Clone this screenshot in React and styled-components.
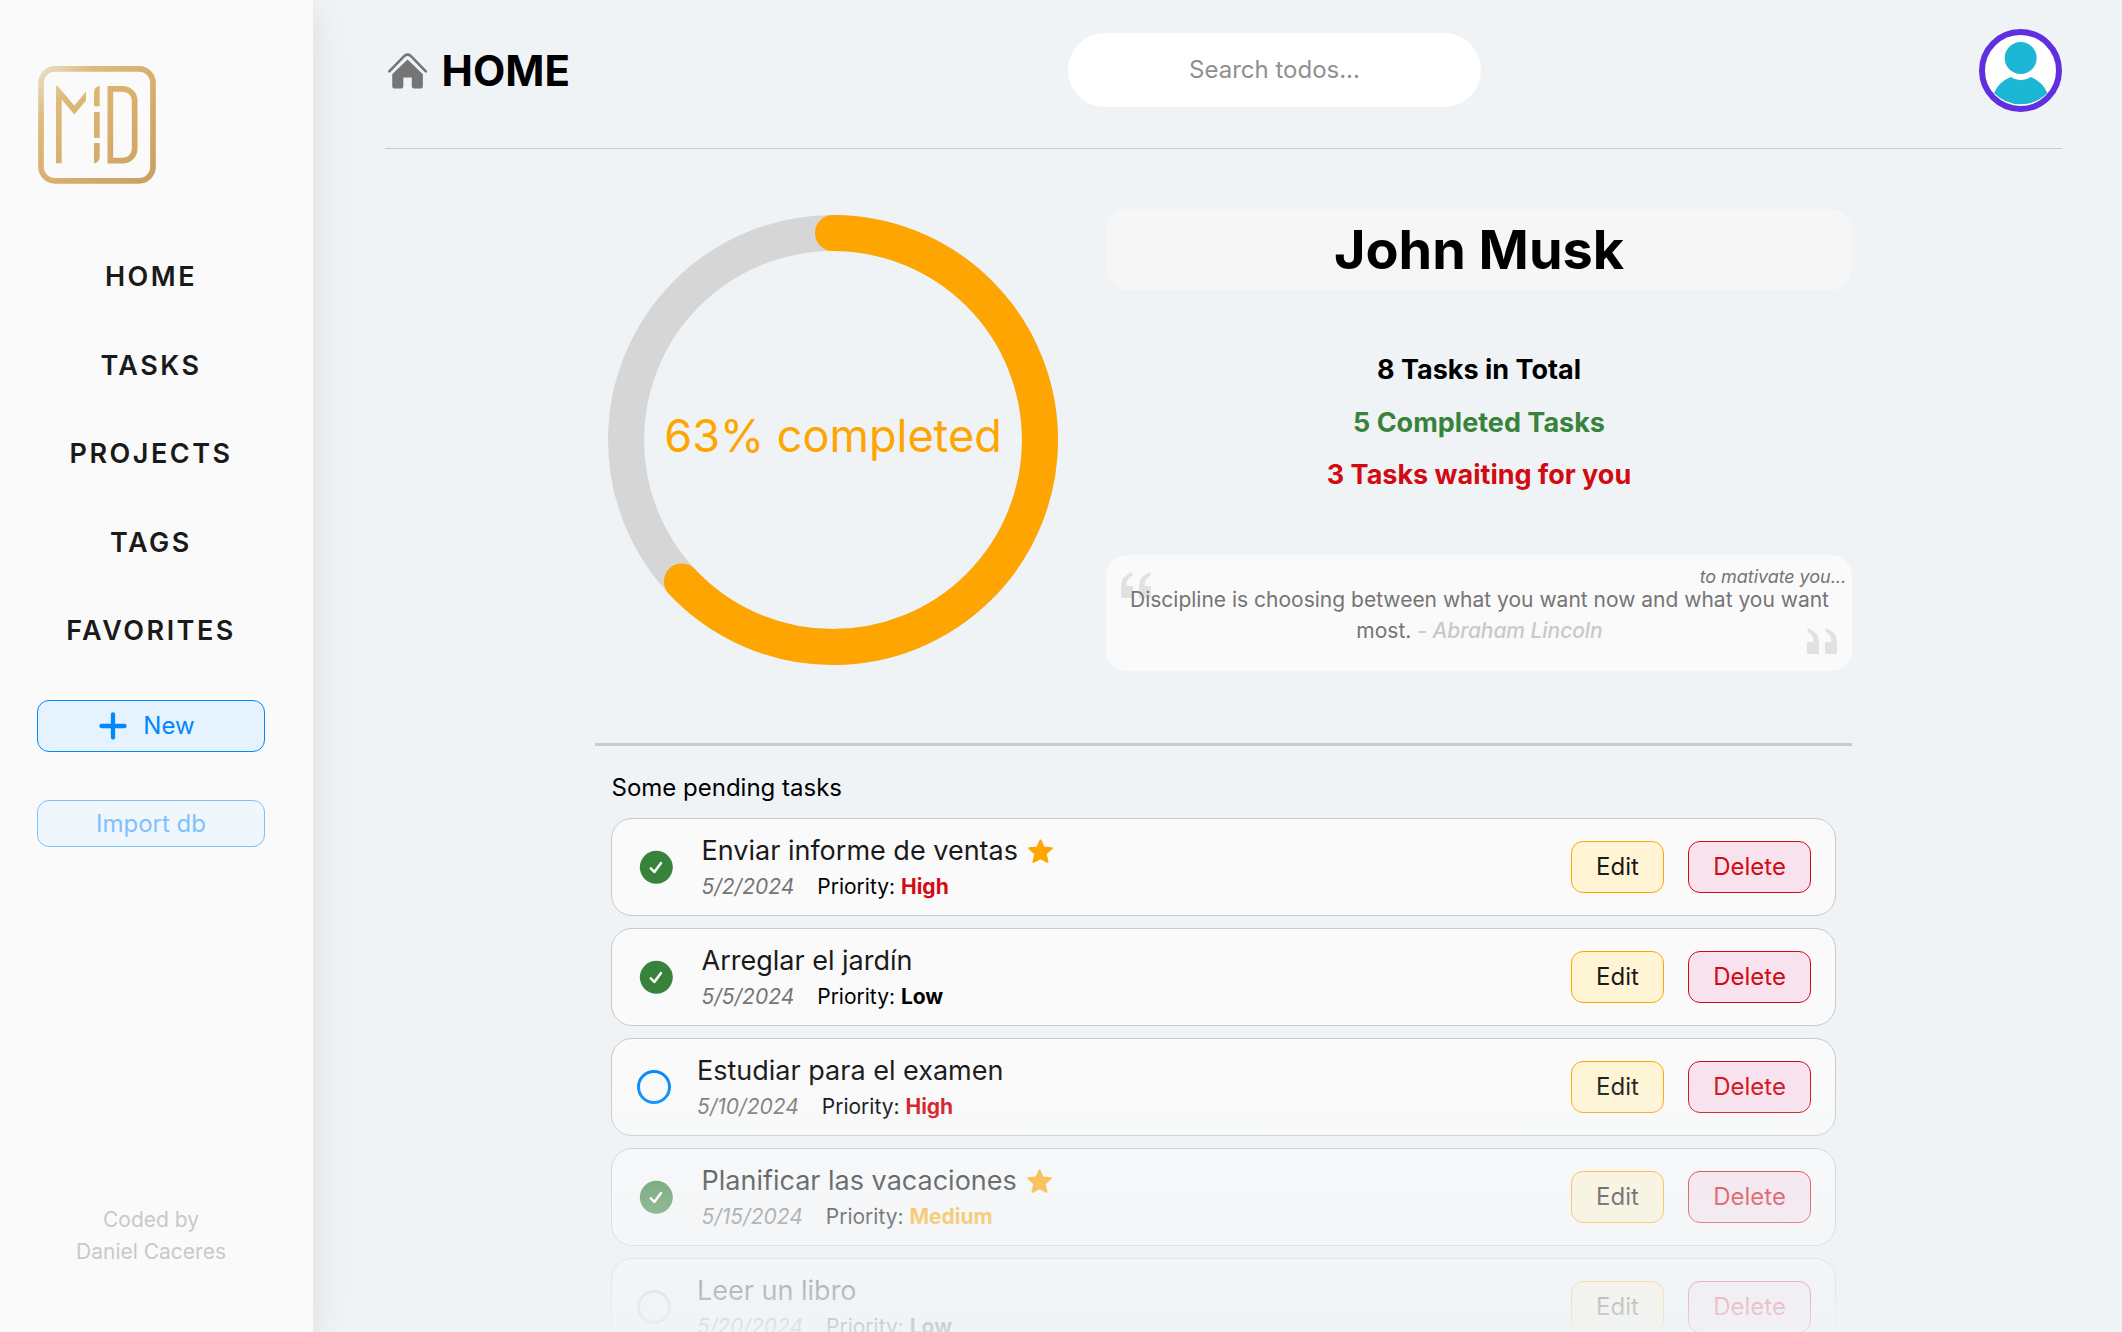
import React from "react";
import styled, { createGlobalStyle, css } from "styled-components";

const GlobalStyle = createGlobalStyle`
  *, *::before, *::after { box-sizing: border-box; }
  body {
    margin: 0;
    background: #eff3f6;
    color: #000;
    font-family: Inter, "Liberation Sans", sans-serif;
    overflow: hidden;
  }
  h1, h2, p, ul { margin: 0; padding: 0; }
  button, input { font-family: inherit; }
`;

const Layout = styled.div`
  display: flex;
  height: 1332px;
  overflow: hidden;
`;

/* ---------- sidebar ---------- */

const Sidebar = styled.aside`
  flex: none;
  display: flex;
  flex-direction: column;
  width: 313px;
  height: 100%;
  padding: 66px 48px 64px 37px;
  background: #fafafa;
  box-shadow: rgba(17, 17, 26, 0.05) 0 6px 24px, rgba(17, 17, 26, 0.05) 0 12px 48px;
`;

const LogoMark = styled.svg`
  display: block;
  width: 118px;
  height: 118px;
  margin-left: 1px;
`;

const Nav = styled.nav`
  display: flex;
  flex-direction: column;
  align-items: center;
  margin-top: 49px;
`;

const NavLink = styled.a`
  color: #1a1a1a;
  font-size: 27px;
  font-weight: 600;
  letter-spacing: 2.5px;
  line-height: 88.5px;
  white-space: nowrap;
`;

const Button = styled.button`
  display: flex;
  align-items: center;
  justify-content: center;
  height: 52px;
  padding: 0 25px;
  border: 1px solid;
  border-radius: 12px;
  font-size: 24px;
  font-weight: 400;
  line-height: 30px;
  ${({ $kind }) =>
    $kind === "edit"
      ? css`
          color: #1a1a1a;
          background: #fff5d5;
          border-color: #ffa502;
        `
      : $kind === "delete"
      ? css`
          color: #d20a11;
          background: #f8e2ee;
          border-color: #d20a11;
        `
      : css`
          color: #0088ff;
          background: #e6f3ff;
          border-color: #0088ff;
        `}
`;

const NewButton = styled(Button)`
  flex: none;
  width: 228px;
  gap: 16px;
  margin-top: 24px;
  padding: 0 8px 0 0;
`;

const ImportButton = styled(Button)`
  flex: none;
  width: 228px;
  height: 47px;
  margin-top: 48px;
  padding: 1px 0 0;
  opacity: 0.5;
`;

const Credits = styled.p`
  margin-top: auto;
  color: #c9c9c9;
  font-size: 21px;
  line-height: 32px;
  text-align: center;
`;

/* ---------- header ---------- */

const Main = styled.main`
  flex: 1;
  display: flex;
  flex-direction: column;
  padding: 0 60px 0 72px;
`;

const Header = styled.header`
  flex: none;
  display: flex;
  align-items: center;
  justify-content: space-between;
  height: 149px;
  padding-bottom: 7px;
  border-bottom: 1px solid #c9c9c9;
`;

const PageTitle = styled.h1`
  display: flex;
  align-items: center;
  gap: 15px;
  width: 185px;
  padding-left: 2.5px;
  font-size: 42px;
  font-weight: 700;
  line-height: 52px;
`;

const Search = styled.input`
  width: 413px;
  height: 74px;
  margin-bottom: 2px;
  border: 0;
  border-radius: 37px;
  background: #fff;
  font-size: 24px;
  font-weight: 400;
  text-align: center;
  outline: none;
  &::placeholder { color: #909090; opacity: 1; }
`;

const Avatar = styled.div`
  width: 83px;
  height: 83px;
  border: 6px solid #5f2fe0;
  border-radius: 50%;
  background: #fff;
  overflow: hidden;
  svg { display: block; }
`;

/* ---------- summary ---------- */

const Content = styled.div`
  display: flex;
  flex-direction: column;
  width: 1257px;
  margin: 60px auto 0;
`;

const Summary = styled.section`
  display: flex;
  align-items: center;
  gap: 48px;
  height: 462px;
  padding-left: 13px;
`;

const Progress = styled.svg`
  flex: none;
  width: 450px;
  height: 450px;
  text {
    fill: #ffa502;
    font-size: 45px;
    font-weight: 400;
    text-anchor: middle;
  }
`;

const Overview = styled.div`
  display: flex;
  flex-direction: column;
  justify-content: space-between;
  flex: 1;
  height: 100%;
`;

const UserName = styled.h2`
  height: 81px;
  border-radius: 21px;
  background: #f6f6f6;
  font-size: 54px;
  font-weight: 700;
  line-height: 81px;
  text-align: center;
`;

const Stats = styled.div`
  display: flex;
  flex-direction: column;
  align-items: center;
  padding-top: 0.5px;
`;

const Stat = styled.p`
  color: ${({ $color }) => $color};
  font-size: 27px;
  font-weight: 700;
  line-height: 52.5px;
`;

const QuoteCard = styled.blockquote`
  position: relative;
  height: 116px;
  margin: 0;
  padding: 12px 6px 0;
  border-radius: 21px;
  background: #fafafa;
  color: #757575;
`;

const QuoteHint = styled.p`
  font-size: 18px;
  font-style: italic;
  letter-spacing: -0.06px;
  line-height: 20px;
  text-align: right;
`;

const QuoteText = styled.p`
  padding: 0 9px 0 10px;
  margin-top: -3px;
  font-size: 21px;
  font-weight: 400;
  line-height: 31px;
  text-align: center;
  position: relative;
  z-index: 1;
  em { color: #c9c9c9; font-weight: 500; letter-spacing: -0.06px; }
`;

const QuoteMark = styled.svg`
  position: absolute;
  width: 30px;
  height: 26px;
  fill: #e1e1e1;
  ${({ $closing }) =>
    $closing
      ? css`
          right: 15px;
          bottom: 17px;
          transform: scaleX(-1);
        `
      : css`
          left: 15px;
          top: 17px;
        `}
`;

/* ---------- tasks ---------- */

const Pending = styled.section`
  position: relative;
  height: 589px;
  margin-top: 72px;
  padding: 24px 16px 0;
  border-top: 3px solid #cbcbcb;
  overflow: hidden;
`;

const Fade = styled.div`
  position: absolute;
  left: 0;
  right: 0;
  bottom: 0;
  height: 265px;
  background: linear-gradient(rgba(239, 243, 246, 0), rgba(239, 243, 246, 0.88));
`;

const PendingTitle = styled.p`
  padding-left: 0.5px;
  font-size: 24px;
  font-weight: 400;
  line-height: 36px;
`;

const TaskList = styled.ul`
  display: flex;
  flex-direction: column;
  gap: 12px;
  margin-top: 12px;
  list-style: none;
`;

const TaskRow = styled.li`
  display: flex;
  align-items: center;
  height: 98px;
  padding: 0 24px 0 ${({ $done }) => ($done ? 27 : 25)}px;
  border: 1px solid #c9c9c9;
  border-radius: 21px;
  background: #fafafa;
`;

const Check = styled.span`
  flex: none;
  display: flex;
  width: 34px;
  height: 34px;
  margin-right: ${({ $done }) => ($done ? 28.5 : 26)}px;
  border: ${({ $done, $muted }) => ($done ? "0" : `3px solid ${$muted ? "#c9c9c9" : "#0088ff"}`)};
  border-radius: 50%;
`;

const TaskBody = styled.div`
  flex: 1;
  display: flex;
  flex-direction: column;
  padding-top: 2px;
`;

const TaskTitle = styled.p`
  display: flex;
  align-items: center;
  gap: 10px;
  color: #1a1a1a;
  font-size: 27px;
  font-weight: 400;
  line-height: 37px;
  svg { margin-top: 2px; }
`;

const TaskMeta = styled.p`
  display: flex;
  gap: 23px;
  font-size: 21px;
  font-weight: 400;
  line-height: 36px;
  i { color: #757575; }
`;

const Priority = styled.b`
  color: ${({ $level }) => ({ High: "#d20a11", Medium: "#ffa502", Low: "#000" }[$level])};
  font-weight: 700;
`;

const Actions = styled.div`
  display: flex;
  gap: 24px;
`;

const EditButton = styled(Button)`width: 93px;`;
const DeleteButton = styled(Button)`width: 123px;`;

/* ---------- drawings ---------- */

const Logo = () => (
  <LogoMark viewBox="114 78 354 354">
    <defs>
      <linearGradient id="gold" gradientUnits="userSpaceOnUse" x1="125" y1="90" x2="460" y2="425">
        <stop offset="0" stopColor="#e8dcc6" />
        <stop offset="0.22" stopColor="#dfba7c" />
        <stop offset="0.5" stopColor="#d9b06c" />
        <stop offset="1" stopColor="#c9a05e" />
      </linearGradient>
      <clipPath id="peak">
        <rect x="168" y="138" width="90" height="232" />
      </clipPath>
    </defs>
    <g fill="none" stroke="url(#gold)" strokeWidth="17">
      <rect x="123" y="86.500" width="336" height="336" rx="42" />
      <path d="M176.500 380V155L223 210.500L268 156" clipPath="url(#peak)" />
      <path d="M331 146.500H368A36 36 0 0 1 404 182.500V326A36 36 0 0 1 368 362H331Z" />
    </g>
    <g fill="url(#gold)">
      <path d="M299 138V199H282V155Q284 140 299 138Z" />
      <rect x="282" y="216" width="17" height="78" />
      <path d="M282 309H299V353Q297 367 282 370Z" />
    </g>
  </LogoMark>
);

const HomeIcon = () => (
  <svg width="40" height="38" viewBox="0 0 120 114" fill="#757575">
    <path d="M4 58L51 10Q60 3 69 10L116 58" fill="none" stroke="#757575" strokeWidth="8" strokeLinecap="round" />
    <path d="M60 22L107 67V103Q107 111 99 111H82Q73 111 73 103V79Q73 77 71 77H49Q47 77 47 79V103Q47 111 38 111H22Q13 111 13 103V67Z" />
  </svg>
);

const PlusIcon = () => (
  <svg width="28" height="28" viewBox="0 0 28 28" fill="none" stroke="#0088ff" strokeWidth="4.300" strokeLinecap="round">
    <path d="M14 2.500V25.500M2.500 14H25.500" />
  </svg>
);

const Person = () => (
  <svg width="71" height="71" viewBox="0 0 213 213" fill="#1cb7d4">
    <circle cx="107" cy="69" r="48" />
    <path d="M77 126Q107 146 138 126Q174 141 187 174Q153 208 107 208Q61 208 27 174Q41 141 77 126Z" />
  </svg>
);

const CheckIcon = () => (
  <svg width="34" height="34" viewBox="0 0 34 34" fill="none" stroke="#fff" strokeWidth="2.500" strokeLinecap="round" strokeLinejoin="round">
    <circle cx="17.300" cy="17.300" r="16.500" fill="#38833b" stroke="none" />
    <path d="M11.800 18.300L15.400 22L22 13" />
  </svg>
);

const StarIcon = () => (
  <svg width="25" height="25" viewBox="0 0 25 25" fill="#ffa502" stroke="#ffa502" strokeWidth="2" strokeLinejoin="round">
    <path d="M12.500 1.500L15.600 8.500L23.800 9.300L17.700 14.800L19.500 23L12.500 19.100L5.500 23L7.300 14.800L1.200 9.300L9.400 8.500Z" />
  </svg>
);

const quoteShape =
  "M34 0V11Q22 17 18 28Q16 34 17 40Q18 43 21 42H33Q36 42 36 45V75Q36 78 33 78H3Q0 78 0 75V42Q0 12 34 0Z";

const Quotes = ({ closing }) => (
  <QuoteMark viewBox="0 0 90 78" $closing={closing}>
    <path d={quoteShape} />
    <path d={quoteShape} transform="translate(54 0)" />
  </QuoteMark>
);

const RADIUS = 207;
const LENGTH = 2 * Math.PI * RADIUS;

const Donut = ({ percent }) => (
  <Progress viewBox="0 0 450 450">
    <circle cx="225" cy="225" r={RADIUS} fill="none" stroke="#d6d6d6" strokeWidth="36" />
    <circle
      cx="225"
      cy="225"
      r={RADIUS}
      fill="none"
      stroke="#ffa502"
      strokeWidth="36"
      strokeLinecap="round"
      strokeDasharray={`${(LENGTH * percent) / 100} ${LENGTH}`}
      transform="rotate(-90 225 225)"
    />
    <text x="225" y="236.700">{percent}% completed</text>
  </Progress>
);

/* ---------- page ---------- */

const links = ["HOME", "TASKS", "PROJECTS", "TAGS", "FAVORITES"];

const tasks = [
  { title: "Enviar informe de ventas", date: "5/2/2024", priority: "High", done: true, starred: true },
  { title: "Arreglar el jardín", date: "5/5/2024", priority: "Low", done: true },
  { title: "Estudiar para el examen", date: "5/10/2024", priority: "High" },
  { title: "Planificar las vacaciones", date: "5/15/2024", priority: "Medium", done: true, starred: true },
  { title: "Leer un libro", date: "5/20/2024", priority: "Low", muted: true },
];

const Task = ({ title, date, priority, done, starred, muted }) => (
  <TaskRow $done={done}>
    <Check $done={done} $muted={muted}>{done && <CheckIcon />}</Check>
    <TaskBody>
      <TaskTitle>
        {title}
        {starred && <StarIcon />}
      </TaskTitle>
      <TaskMeta>
        <i>{date}</i>
        <span>
          Priority: <Priority $level={priority}>{priority}</Priority>
        </span>
      </TaskMeta>
    </TaskBody>
    <Actions>
      <EditButton $kind="edit">Edit</EditButton>
      <DeleteButton $kind="delete">Delete</DeleteButton>
    </Actions>
  </TaskRow>
);

export default function App() {
  return (
    <>
      <GlobalStyle />
      <Layout>
        <Sidebar>
          <Logo />
          <Nav>
            {links.map((link) => (
              <NavLink key={link}>{link}</NavLink>
            ))}
          </Nav>
          <NewButton>
            <PlusIcon />
            New
          </NewButton>
          <ImportButton>Import db</ImportButton>
          <Credits>
            Coded by
            <br />
            Daniel Caceres
          </Credits>
        </Sidebar>
        <Main>
          <Header>
            <PageTitle>
              <HomeIcon />
              HOME
            </PageTitle>
            <Search placeholder="Search todos..." />
            <Avatar>
              <Person />
            </Avatar>
          </Header>
          <Content>
            <Summary>
              <Donut percent={63} />
              <Overview>
                <UserName>John Musk</UserName>
                <Stats>
                  <Stat $color="#000">8 Tasks in Total</Stat>
                  <Stat $color="#38833b">5 Completed Tasks</Stat>
                  <Stat $color="#d20a11">3 Tasks waiting for you</Stat>
                </Stats>
                <QuoteCard>
                  <Quotes />
                  <QuoteHint>to mativate you...</QuoteHint>
                  <QuoteText>
                    Discipline is choosing between what you want now and what you want most.{" "}
                    <em>- Abraham Lincoln</em>
                  </QuoteText>
                  <Quotes closing />
                </QuoteCard>
              </Overview>
            </Summary>
            <Pending>
              <PendingTitle>Some pending tasks</PendingTitle>
              <TaskList>
                {tasks.map((task) => (
                  <Task key={task.title} {...task} />
                ))}
              </TaskList>
              <Fade />
            </Pending>
          </Content>
        </Main>
      </Layout>
    </>
  );
}
